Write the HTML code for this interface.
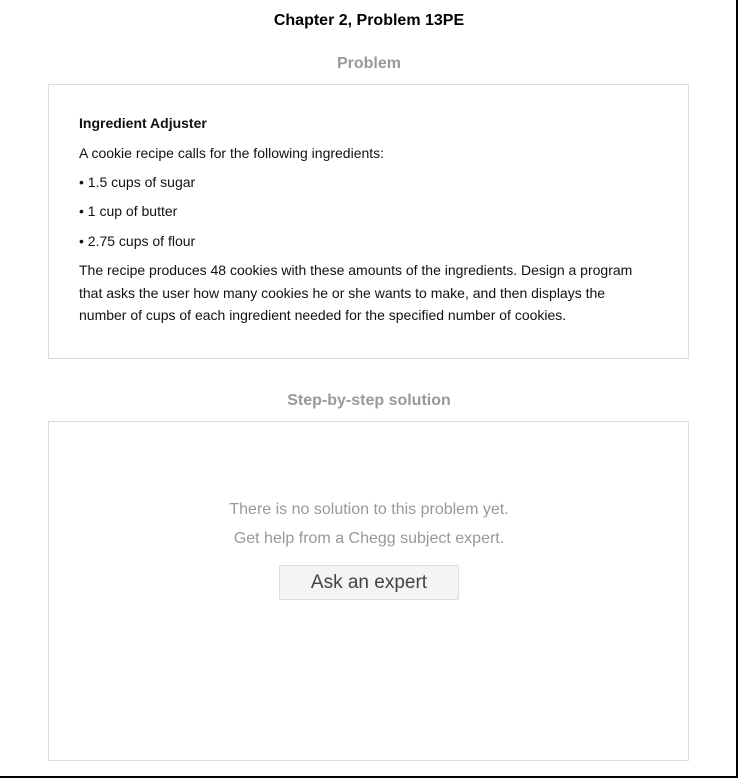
<!DOCTYPE html>
<html><head><style>
body{margin:0;width:738px;height:778px;background:#fff;position:relative;overflow:hidden;font-family:"Liberation Sans",Arial,sans-serif}
.frame{position:absolute;left:0;top:0;width:736px;height:776px;border-right:2px solid #000;border-bottom:2px solid #000}
.t{position:absolute;left:0;width:738px;text-align:center}
.box{position:absolute;left:48px;width:639px;border:1px solid #ddd}
p{position:absolute;left:79px;margin:0;font-size:14px;color:#111}
</style></head><body>
<div class="frame"></div>
<div class="t" style="top:12px;font-size:16px;font-weight:bold;color:#000">Chapter 2, Problem 13PE</div>
<div class="t" style="top:55px;font-size:16px;font-weight:bold;color:#999">Problem</div>
<div class="box" style="top:84px;height:273px"></div>
<p style="top:115px;font-weight:bold">Ingredient Adjuster</p>
<p style="top:145px">A cookie recipe calls for the following ingredients:</p>
<p style="top:174px">• 1.5 cups of sugar</p>
<p style="top:203px">• 1 cup of butter</p>
<p style="top:233px">• 2.75 cups of flour</p>
<p style="top:259px;width:568px;line-height:22.5px">The recipe produces 48 cookies with these amounts of the ingredients. Design a program that asks the user how many cookies he or she wants to make, and then displays the number of cups of each ingredient needed for the specified number of cookies.</p>
<div class="t" style="top:392px;font-size:16px;font-weight:bold;color:#999">Step-by-step solution</div>
<div class="box" style="top:421px;height:338px"></div>
<div class="t" style="top:501px;font-size:16px;color:#999">There is no solution to this problem yet.</div>
<div class="t" style="top:530px;font-size:16px;color:#999">Get help from a Chegg subject expert.</div>
<div style="position:absolute;left:279px;top:565px;width:178px;height:33px;border:1px solid #ddd;border-radius:2px;background:#f4f4f4;text-align:center;line-height:34px;font-size:19px;color:#444">Ask an expert</div>
</body></html>
